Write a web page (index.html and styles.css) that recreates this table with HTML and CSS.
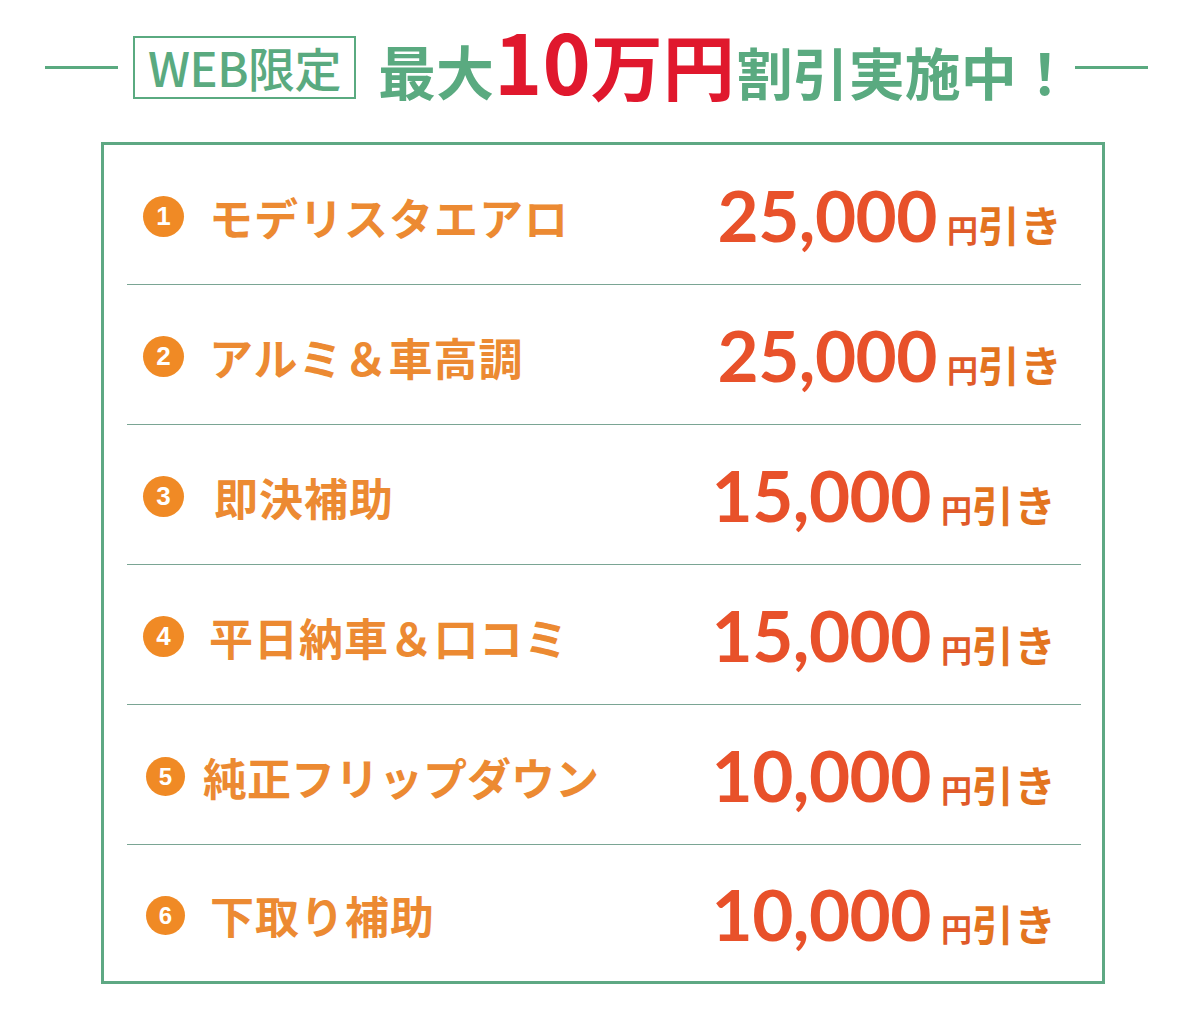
FILE: index.html
```html
<!DOCTYPE html>
<html lang="ja">
<head>
<meta charset="utf-8">
<link rel="stylesheet" href="styles.css">
</head>
<body>
<div class="page">
  <header class="head">
    <span class="rule"></span>
    <span class="web">WEB限定</span>
    <span class="title">
      <span class="t-green t-big">最大</span><span class="t-red t-num">10</span><span class="t-red t-kanji">万円</span><span class="t-green t-mid">割引実施中！</span>
    </span>
    <span class="rule"></span>
  </header>
  <section class="box">
    <div class="row">
      <div class="label"><span class="num">1</span><span class="name">モデリスタエアロ</span></div>
      <div class="price"><span class="amt">25,000</span><span class="yen">円</span><span class="off">引き</span></div>
    </div>
    <div class="row">
      <div class="label"><span class="num">2</span><span class="name">アルミ＆車高調</span></div>
      <div class="price"><span class="amt">25,000</span><span class="yen">円</span><span class="off">引き</span></div>
    </div>
    <div class="row">
      <div class="label"><span class="num">3</span><span class="name name-in">即決補助</span></div>
      <div class="price price-in"><span class="amt">15,000</span><span class="yen">円</span><span class="off">引き</span></div>
    </div>
    <div class="row">
      <div class="label"><span class="num">4</span><span class="name">平日納車＆口コミ</span></div>
      <div class="price price-in"><span class="amt">15,000</span><span class="yen">円</span><span class="off">引き</span></div>
    </div>
    <div class="row">
      <div class="label"><span class="num num-in">5</span><span class="name name-tight">純正フリップダウン</span></div>
      <div class="price price-in"><span class="amt">10,000</span><span class="yen">円</span><span class="off">引き</span></div>
    </div>
    <div class="row row-last">
      <div class="label"><span class="num num-in">6</span><span class="name">下取り補助</span></div>
      <div class="price price-in"><span class="amt">10,000</span><span class="yen">円</span><span class="off">引き</span></div>
    </div>
  </section>
</div>
</body>
</html>
```

FILE: styles.css
```css
html, body {
  margin: 0;
  padding: 0;
  background: #ffffff;
}
.page {
  width: 1200px;
  height: 1031px;
  font-family: "Noto Sans CJK JP", "Noto Sans", sans-serif;
}
.head {
  display: flex;
  align-items: center;
  padding: 32px 0 0 45px;
  height: 70px;
}
.rule {
  width: 73px;
  height: 3px;
  background: #5aaa80;
}
.web {
  box-sizing: border-box;
  margin-left: 15px;
  width: 223px;
  height: 63px;
  border: 2px solid #5aaa80;
  color: #5aaa80;
  font-size: 47px;
  font-weight: 500;
  line-height: 57px;
  text-align: center;
  letter-spacing: -0.5px;
}
.title {
  display: flex;
  align-items: baseline;
  margin: 0 2px 14px 22px;
  font-weight: 700;
  line-height: 1.2;
}
.t-green { color: #5aaa80; }
.t-big { font-size: 58px; }
.t-red { color: #e0182d; }
.t-num {
  font-size: 82px;
}
.t-kanji {
  font-size: 72px;
}
.t-mid { font-size: 56px; margin-left: 2px; }
.box {
  box-sizing: border-box;
  margin: 40px 0 0 101px;
  width: 1004px;
  border: 3px solid #5ea883;
  padding: 0 21px 0 23px;
}
.row {
  display: flex;
  align-items: center;
  justify-content: space-between;
  height: 140px;
  border-bottom: 1px solid #7aa594;
  padding: 5px 19px 0 16px;
  box-sizing: border-box;
}
.row-last {
  height: 136px;
  border-bottom: none;
}
.label {
  display: flex;
  align-items: center;
}
.num {
  width: 41px;
  height: 41px;
  border-radius: 50%;
  background: #f08a25;
  color: #ffffff;
  font-family: "Liberation Sans", Arial, sans-serif;
  font-weight: 700;
  font-size: 26px;
  line-height: 41px;
  text-align: center;
}
.num-in { margin-left: 3px; width: 39px; height: 39px; line-height: 39px; font-size: 24px; }
.name {
  margin-left: 25px;
  color: #ec8a32;
  font-size: 44px;
  font-weight: 700;
  line-height: 1.2;
  letter-spacing: 1px;
}
.name-in { margin-left: 30px; }
.name-tight { margin-left: 18px; letter-spacing: 0; }
.price {
  display: flex;
  align-items: baseline;
  line-height: 1.2;
  margin-top: -4px;
}
.price-in { margin-right: 6px; }
.amt {
  color: #e8512a;
  font-family: "Lato", "Noto Sans", sans-serif;
  font-weight: 700;
  font-size: 71px;
  letter-spacing: -0.5px;
}
.yen {
  margin-left: 10px;
  color: #e05a2a;
  font-size: 31px;
  font-weight: 700;
}
.off {
  color: #e3741f;
  font-size: 42px;
  font-weight: 700;
}
```
